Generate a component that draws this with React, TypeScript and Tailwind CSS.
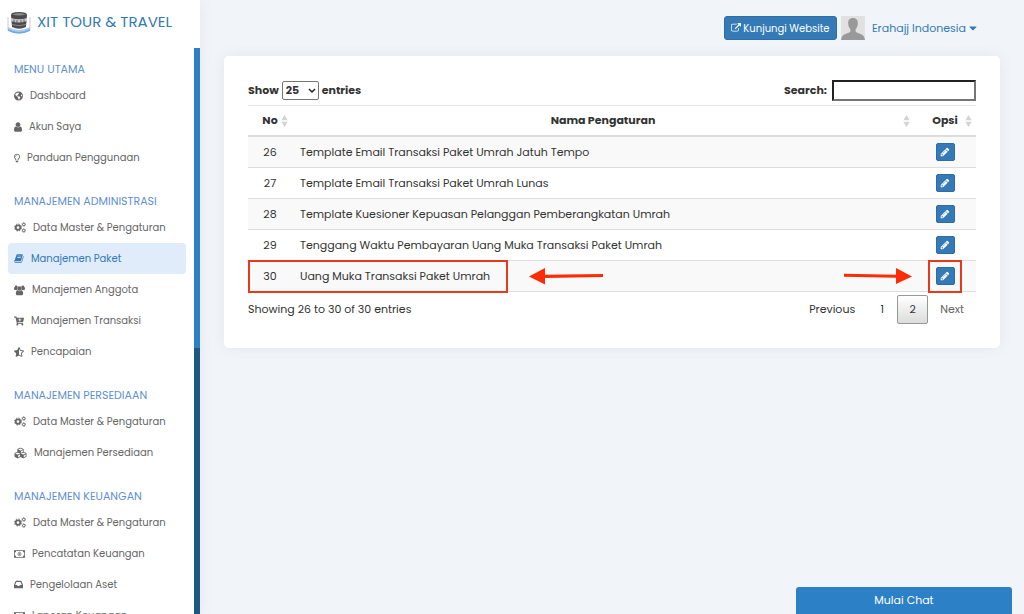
import type { ReactNode } from 'react'
import type { IconType } from 'react-icons'
import {
  FaCartPlus,
  FaCaretDown,
  FaCubes,
  FaGlobeAmericas,
  FaRegLightbulb,
  FaStarHalfAlt,
} from 'react-icons/fa'

// ─── Icons ───────────────────────────────────────────────────────────────────

type IconProps = { className?: string }

function Glyph({ d, className }: { d: string; className?: string }) {
  return (
    <svg viewBox="0 0 1792 1792" fill="currentColor" className={className} aria-hidden="true">
      <path d={d} />
    </svg>
  )
}

const BOOK =
  'M1703 478q40 57 18 129l-275 906q-19 64-76.5 107.5t-122.5 43.5h-923q-77 0-148.5-53.5t-99.5-131.5q-24-67-2-127 0-4 3-27t4-37q1-8-3-21.5t-3-19.5q2-11 8-21t16.5-23.5 16.5-23.5q23-38 45-91.5t30-91.5q3-10 .5-30t-.5-28q3-11 17-28t17-23q21-36 42-92t25-90q1-9-2.5-32t.5-28q4-13 22-30.5t22-22.5q19-26 42.5-84.5t27.5-96.5q1-8-3-25.5t-2-26.5q2-8 9-18t18-23 17-21q8-12 16.5-30.5t15-35 16-36 19.5-32 26.5-23.5 36-11.5 47.5 5.5l-1 3q38-9 51-9h761q74 0 114 56t18 130l-274 906q-36 119-71.5 153.5t-128.5 34.5h-869q-27 0-38 15-11 16-1 43 24 70 144 70h923q29 0 56-15.5t35-41.5l300-987q7-22 5-57 38 15 59 43zm-1064 2q-4 13 2 22.5t20 9.5h608q13 0 25.5-9.5t16.5-22.5l21-64q4-13-2-22.5t-20-9.5h-608q-13 0-25.5 9.5t-16.5 22.5zm-83 256q-4 13 2 22.5t20 9.5h608q13 0 25.5-9.5t16.5-22.5l21-64q4-13-2-22.5t-20-9.5h-608q-13 0-25.5 9.5t-16.5 22.5z'
const PENCIL =
  'M491 1536l91-91-235-235-91 91v107h128v128h107zm523-928q0-22-22-22-10 0-17 7l-542 542q-7 7-7 17 0 22 22 22 10 0 17-7l542-542q7-7 7-17zm-54-192l416 416-832 832h-416v-416zm683 96q0 53-37 90l-166 166-416-416 166-165q36-38 90-38 53 0 91 38l235 234q37 39 37 91z'
const EXTERNAL =
  'M1408 928v320q0 119-84.5 203.5t-203.5 84.5h-832q-119 0-203.5-84.5t-84.5-203.5v-832q0-119 84.5-203.5t203.5-84.5h704q14 0 23 9t9 23v64q0 14-9 23t-23 9h-704q-66 0-113 47t-47 113v832q0 66 47 113t113 47h832q66 0 113-47t47-113v-320q0-14 9-23t23-9h64q14 0 23 9t9 23zm384-864v512q0 26-19 45t-45 19-45-19l-176-176-652 652q-10 10-23 10t-23-10l-114-114q-10-10-10-23t10-23l652-652-176-176q-19-19-19-45t19-45 45-19h512q26 0 45 19t19 45z'

const BookIcon = ({ className }: IconProps) => <Glyph d={BOOK} className={className} />

function UserIcon({ className }: IconProps) {
  return (
    <svg viewBox="256 128 1280 1536" fill="currentColor" className={className} aria-hidden="true">
      <path d="M1536 1399q0 109-62.500 187t-150.500 78h-854q-88 0-150.500-78t-62.500-187q0-85 8.500-160.500t31.500-152 58.500-131 94-89 134.500-34.500q131 128 313 128t313-128q76 0 134.500 34.500t94 89 58.500 131 31.500 152 8.500 160.500zm-256-887q0 159-112.500 271.500t-271.500 112.500-271.500-112.500-112.500-271.500 112.500-271.500 271.500-112.500 271.500 112.500 112.500 271.500z" />
    </svg>
  )
}

function CogsIcon({ className }: IconProps) {
  return (
    <svg viewBox="0 0 24 22" fill="none" stroke="currentColor" className={className} aria-hidden="true">
      <circle cx="8" cy="11" r="4.500" strokeWidth="3.500" />
      <circle cx="8" cy="11" r="7" strokeWidth="2" strokeDasharray="2.750 2.750" />
      <circle cx="19.500" cy="5" r="2.500" strokeWidth="2" />
      <circle cx="19.500" cy="5" r="4" strokeWidth="1.200" strokeDasharray="1.570 1.570" />
      <circle cx="19.500" cy="17" r="2.500" strokeWidth="2" />
      <circle cx="19.500" cy="17" r="4" strokeWidth="1.200" strokeDasharray="1.570 1.570" />
    </svg>
  )
}

function UsersIcon({ className }: IconProps) {
  return (
    <svg viewBox="0 0 30 28" fill="currentColor" className={className} aria-hidden="true">
      <circle cx="6" cy="6" r="4" />
      <circle cx="24" cy="6" r="4" />
      <circle cx="15" cy="10" r="6" />
      <path d="M9.300 14H3c-1.700 0-3-.8-3-2.500C0 10.700 0 6 2 6c.300 0 2 1.300 4 1.300.7 0 1.400-.1 2-.3v1c0 2 .3 4 1.300 6zM25 23.900c0 2.500-1.700 4.100-4.100 4.100H9.100C6.700 28 5 26.500 5 23.900 5 20.400 5.800 15 10.300 15c.5 0 2.400 2.100 4.700 2.100s4.200-2.100 4.700-2.100c4.500 0 5.300 5.400 5.300 8.900zM30 11.500c0 1.700-1.300 2.500-3 2.500h-6.300c1-2 1.300-4 1.300-6V7c.6.2 1.300.3 2 .3 2 0 3.700-1.300 4-1.300 2 0 2 4.700 2 5.500z" />
    </svg>
  )
}

function MoneyIcon({ className }: IconProps) {
  return (
    <svg viewBox="0 0 30 24" className={className} aria-hidden="true">
      <path d="M0 2h30v20H0zM6 4a4 4 0 0 1-4 4v8a4 4 0 0 1 4 4h18a4 4 0 0 1 4-4V8a4 4 0 0 1-4-4z" fill="currentColor" fillRule="evenodd" />
      <ellipse cx="15" cy="12" rx="4" ry="5" fill="none" stroke="currentColor" strokeWidth="2" />
      <path d="M15 9v6" stroke="currentColor" strokeWidth="2" />
    </svg>
  )
}

function InboxIcon({ className }: IconProps) {
  return (
    <svg viewBox="0 0 24 22" fill="currentColor" className={className} aria-hidden="true">
      <path d="M5.500 1h13l1.500 1 4 10v8q0 1-1 1H1q-1 0-1-1v-8L4 2zm.9 3L3.200 12h5l1.500 3h4.600l1.500-3h5L17.600 4z" fillRule="evenodd" />
    </svg>
  )
}

function Logo() {
  return (
    <svg viewBox="0 0 24 24" className="h-6 w-6 shrink-0" aria-hidden="true">
      <path d="M1 7v13M23 7v13" stroke="#d9dde2" strokeWidth="1.500" />
      <path d="M1 17 Q12 23 23 17 V20.500 Q12 27 1 20.500Z" fill="#a9cdf0" />
      <path d="M1 20 Q12 25.500 23 20" stroke="#6fa9e2" strokeWidth="1.500" fill="none" />
      <path d="M4 5 Q4 2 12 2 Q20 2 20 5 L19 17 Q12 20.500 5 17Z" fill="#4b4b4d" />
      <path d="M5 4.500 Q12 1.500 19 4.500 Q12 6.500 5 4.500Z" fill="#8a8a8a" />
      <path d="M4 8 Q12 10.500 20 8 L20 11 Q12 14 4 11Z" fill="#c9c9c9" />
      <path d="M7 9.500v2.500M10 10.200v2.500M14 10.200v2.500M17 9.500v2.500" stroke="#555" strokeWidth="1" />
      <path d="M5 14.500 Q12 17 19 14.500" stroke="#888" strokeWidth="1" fill="none" />
    </svg>
  )
}

function SortIcon() {
  return (
    <svg viewBox="0 0 6 12" className="absolute right-1 top-1/2 h-3 w-[7px] -translate-y-1/2" fill="#d4d4d4" aria-hidden="true">
      <path d="M3 0 6 5H0zM3 12 0 7h6z" />
      <path d="M0 5.600h6v.8H0z" opacity=".5" />
    </svg>
  )
}

// ─── Sidebar ─────────────────────────────────────────────────────────────────

type MenuItem = {
  label: string
  icon: IconType | ((props: IconProps) => ReactNode)
  size: string
  active?: boolean
}

const MENU: { title: string; items: MenuItem[] }[] = [
  {
    title: 'MENU UTAMA',
    items: [
      { label: 'Dashboard', icon: FaGlobeAmericas, size: 'w-[9px] h-[10px]' },
      { label: 'Akun Saya', icon: UserIcon, size: 'w-2 h-[10px]' },
      { label: 'Panduan Penggunaan', icon: FaRegLightbulb, size: 'w-[6px] h-[10px]' },
    ],
  },
  {
    title: 'MANAJEMEN ADMINISTRASI',
    items: [
      { label: 'Data Master & Pengaturan', icon: CogsIcon, size: 'w-3 h-[11px]' },
      { label: 'Manajemen Paket', icon: BookIcon, size: 'w-[10px] h-[11px]', active: true },
      { label: 'Manajemen Anggota', icon: UsersIcon, size: 'w-[11px] h-3' },
      { label: 'Manajemen Transaksi', icon: FaCartPlus, size: 'w-[10px] h-[10px]' },
      { label: 'Pencapaian', icon: FaStarHalfAlt, size: 'w-[10px] h-[10px]' },
    ],
  },
  {
    title: 'MANAJEMEN PERSEDIAAN',
    items: [
      { label: 'Data Master & Pengaturan', icon: CogsIcon, size: 'w-3 h-[11px]' },
      { label: 'Manajemen Persediaan', icon: FaCubes, size: 'w-[13px] h-3' },
    ],
  },
  {
    title: 'MANAJEMEN KEUANGAN',
    items: [
      { label: 'Data Master & Pengaturan', icon: CogsIcon, size: 'w-3 h-[11px]' },
      { label: 'Pencatatan Keuangan', icon: MoneyIcon, size: 'w-[11px] h-[10px]' },
      { label: 'Pengelolaan Aset', icon: InboxIcon, size: 'w-[9px] h-[9px]' },
      { label: 'Laporan Keuangan', icon: MoneyIcon, size: 'w-[11px] h-[10px]' },
    ],
  },
]

function Sidebar() {
  return (
    <aside className="flex h-screen w-[200px] shrink-0 flex-col overflow-hidden bg-white shadow-[0_0_14px_rgba(80,80,130,0.08)]">
      <a href="#" className="flex h-12 shrink-0 items-center gap-1.5 whitespace-nowrap pb-1 pl-[7px] text-[15px] text-[#337ab7]">
        <Logo />
        XIT TOUR &amp; TRAVEL
      </a>
      <div className="flex min-h-0 flex-1">
        <nav className="flex min-w-0 flex-1 flex-col gap-[18px] overflow-hidden pl-2 pr-2 pt-[11px]">
          {MENU.map(group => (
            <section key={group.title} className="shrink-0">
              <h2 className="h-[21px] whitespace-nowrap pl-1.5 text-[11px] leading-5 text-[#5f8fd3]">{group.title}</h2>
              <ul>
                {group.items.map(({ label, icon: Icon, size, active }) => (
                  <li key={label}>
                    <a
                      href="#"
                      className={`flex h-[31px] items-center gap-[7px] whitespace-nowrap rounded-[4px] pl-1.5 text-[10px] ${
                        active ? 'bg-[#e0ecf9] text-[#337ab7]' : 'text-[#666]'
                      }`}
                    >
                      <Icon className={`${size} shrink-0`} />
                      {label}
                    </a>
                  </li>
                ))}
              </ul>
            </section>
          ))}
        </nav>
        {/* scroll rail */}
        <div className="w-1.5 bg-[#1d5782]">
          <div className="h-[53%] bg-[#2c80c6]" />
        </div>
      </div>
    </aside>
  )
}

// ─── Top bar ─────────────────────────────────────────────────────────────────

function TopBar() {
  return (
    <header className="flex h-14 items-center justify-end pr-[47px]">
      <button type="button" className="flex h-6 w-[113px] items-center justify-center gap-0.5 whitespace-nowrap rounded-[3px] border border-[#2e6da4] bg-[#337ab7] text-[10px] text-white">
        <Glyph d={EXTERNAL} className="h-2.5 w-2.5 shrink-0" />
        Kunjungi Website
      </button>
      <svg viewBox="0 0 24 24" className="ml-1 h-6 w-6" role="img" aria-label="Foto profil">
        <rect width="24" height="24" fill="#e1e1e1" />
        <path d="M12 2c3.500 0 5 2.300 4.800 5.500-.1 3-1.100 4.500-2.200 5.800v2.200c1 1.500 4.500 2 6.900 3.500 1.500 1 2 3 2.500 5H0c.3-2 1-4 2.500-5 2.400-1.500 5.900-2 6.900-3.500v-2.200C8.300 12 7.300 10.500 7.200 7.500 7 4.300 8.500 2 12 2z" fill="#999" />
      </svg>
      <button type="button" className="ml-[7px] flex items-center gap-[3px] whitespace-nowrap text-[11px] text-[#337ab7]">
        Erahajj Indonesia
        <FaCaretDown className="h-3 w-2" />
      </button>
    </header>
  )
}

// ─── Settings table ──────────────────────────────────────────────────────────

const ROWS = [
  { no: 26, name: 'Template Email Transaksi Paket Umrah Jatuh Tempo' },
  { no: 27, name: 'Template Email Transaksi Paket Umrah Lunas' },
  { no: 28, name: 'Template Kuesioner Kepuasan Pelanggan Pemberangkatan Umrah' },
  { no: 29, name: 'Tenggang Waktu Pembayaran Uang Muka Transaksi Paket Umrah' },
  { no: 30, name: 'Uang Muka Transaksi Paket Umrah' },
]

const MARKED = 30

function Th({ children, className = '' }: { children: ReactNode; className?: string }) {
  return (
    <th className={`relative h-8 border-b-2 border-t border-[#ddd] border-t-[#e6e6e6] p-0 font-bold ${className}`}>
      {children}
      <SortIcon />
    </th>
  )
}

function SettingsTable() {
  return (
    <table className="mt-[5px] w-full table-fixed border-separate border-spacing-0">
      <thead>
        <tr>
          <Th className="w-[44px]">No</Th>
          <Th>Nama Pengaturan</Th>
          <Th className="w-[62px]">Opsi</Th>
        </tr>
      </thead>
      <tbody>
        {ROWS.map(row => {
          const marked = row.no === MARKED
          return (
            <tr key={row.no} className="odd:bg-[#f9f9f9]">
              <td className="relative h-[31px] border-b border-[#ddd] p-0 text-center">
                {row.no}
                {marked && (
                  <div className="pointer-events-none absolute -top-px left-0 z-10 h-[33px] w-[260px] border-2 border-[#e8391b]" />
                )}
              </td>
              <td className="relative h-[31px] border-b border-[#ddd] py-0 pl-2 pr-2">
                {row.name}
                {marked && (
                  <>
                    <svg viewBox="0 0 74 18" className="absolute left-[237px] top-[6px] h-[18px] w-[74px]" fill="#fb2c06" aria-hidden="true">
                      <path d="M0 9.500 16 1v6.800L74 7v3l-58 1v6.500z" />
                    </svg>
                    <svg viewBox="0 0 68 18" className="absolute right-0.5 top-[6px] h-[18px] w-[68px]" fill="#fb2c06" aria-hidden="true">
                      <path d="M68 9.500 52 17v-6.300L0 9.700v-3l52 1V1z" />
                    </svg>
                  </>
                )}
              </td>
              <td className="relative h-[31px] border-b border-[#ddd] p-0">
                <button type="button" aria-label={`Edit ${row.name}`} className="mx-auto flex h-[18px] w-[19px] items-center justify-center rounded-[2px] border border-[#2e6da4] bg-[#337ab7] text-white">
                  <Glyph d={PENCIL} className="h-2.5 w-2.5" />
                </button>
                {marked && (
                  <div className="pointer-events-none absolute -top-px left-[14px] z-10 h-[33px] w-[34px] border-2 border-[#e8391b]" />
                )}
              </td>
            </tr>
          )
        })}
      </tbody>
    </table>
  )
}

function SettingsCard() {
  return (
    <section className="mx-6 rounded-[5px] bg-white p-6 text-[11px] text-[#333] shadow-[0_0_14px_rgba(80,80,130,0.08)]">
      <div className="flex h-5 items-center justify-between font-bold">
        <label className="flex items-center gap-[3px]">
          Show
          <span className="relative flex">
            <select defaultValue="25" className="h-[19px] w-[37px] appearance-none rounded-[2px] border border-[#767676] bg-white pl-[3px] text-[11px] leading-4">
              <option>10</option>
              <option>25</option>
              <option>50</option>
              <option>100</option>
            </select>
            <svg viewBox="0 0 8 6" className="pointer-events-none absolute right-[3px] top-[7px] h-1.5 w-2" fill="none" stroke="#222" strokeWidth="1.500" aria-hidden="true">
              <path d="M1 1l3 3 3-3" />
            </svg>
          </span>
          entries
        </label>
        <label className="flex items-center gap-[5px]">
          Search:
          <input type="search" className="h-[21px] w-36 border-2 border-[#767676] border-l-[#222] border-t-[#222] bg-white px-1" />
        </label>
      </div>
      <SettingsTable />
      <div className="flex items-start justify-between pt-[3px]">
        <p className="pt-1 leading-5">Showing 26 to 30 of 30 entries</p>
        <div className="flex h-[29px] items-stretch">
          <button type="button" className="px-3">Previous</button>
          <button type="button" className="w-[30px]">1</button>
          <button type="button" aria-current="page" className="w-[31px] rounded-[2px] border border-[#979797] bg-linear-to-b from-white to-[#dcdcdc]">2</button>
          <button type="button" className="px-3 text-[#666]">Next</button>
        </div>
      </div>
    </section>
  )
}

export default function App() {
  return (
    <div className="flex h-screen overflow-hidden bg-[#f1f5f9] font-[Poppins,Inter,sans-serif]">
      <Sidebar />
      <main className="min-w-0 flex-1">
        <TopBar />
        <SettingsCard />
      </main>
      <button type="button" className="fixed bottom-0 right-3 h-[27px] w-[216px] rounded-t-[3px] bg-[#2c80c6] text-[11px] text-white">
        Mulai Chat
      </button>
    </div>
  )
}
